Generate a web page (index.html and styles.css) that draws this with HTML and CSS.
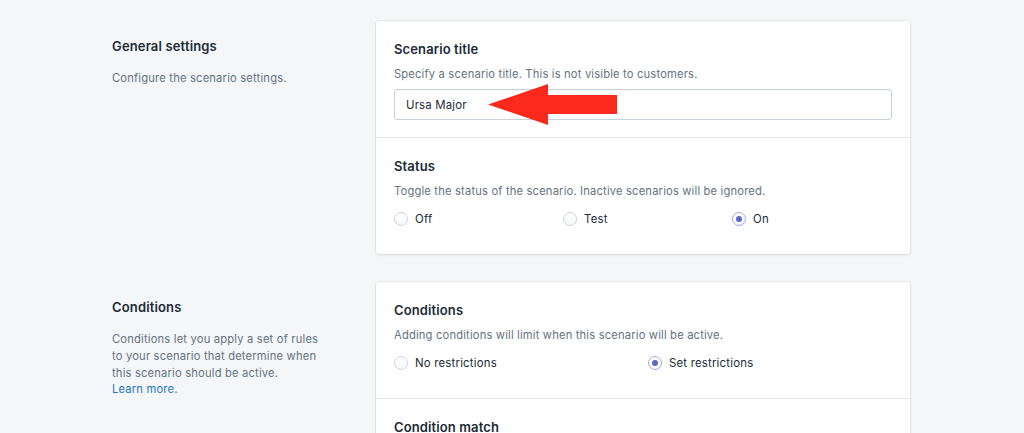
FILE: index.html
```html
<!DOCTYPE html>
<html lang="en">
<head>
<meta charset="utf-8">
<title>Scenario settings</title>
<link rel="stylesheet" href="styles.css">
</head>
<body>
<div class="page">
  <section class="row">
    <div class="annot">
      <h2 class="annot-title">General settings</h2>
      <p class="annot-desc">Configure the scenario settings.</p>
    </div>
    <div class="card">
      <div class="card-section section-field">
        <h3 class="sec-title">Scenario title</h3>
        <p class="sec-desc">Specify a scenario title. This is not visible to customers.</p>
        <div class="field">
          <input class="text-input" type="text" value="Ursa Major">
          <svg class="arrow" width="129" height="41" viewBox="0 0 129 41" aria-hidden="true">
            <polygon points="0,20.5 60,0 60,11 129,11 129,30 60,30 60,41" fill="#fb2a1d"/>
          </svg>
        </div>
      </div>
      <div class="card-section divided">
        <h3 class="sec-title">Status</h3>
        <p class="sec-desc">Toggle the status of the scenario. Inactive scenarios will be ignored.</p>
        <div class="choices choices-3">
          <label class="choice"><span class="radio"></span><span class="choice-label">Off</span></label>
          <label class="choice"><span class="radio"></span><span class="choice-label">Test</span></label>
          <label class="choice"><span class="radio checked"></span><span class="choice-label">On</span></label>
        </div>
      </div>
    </div>
  </section>
  <section class="row">
    <div class="annot">
      <h2 class="annot-title">Conditions</h2>
      <p class="annot-desc">Conditions let you apply a set of rules to your scenario that determine when this scenario should be active.<br><a class="link" href="#">Learn more.</a></p>
    </div>
    <div class="card">
      <div class="card-section">
        <h3 class="sec-title">Conditions</h3>
        <p class="sec-desc">Adding conditions will limit when this scenario will be active.</p>
        <div class="choices choices-2">
          <label class="choice"><span class="radio"></span><span class="choice-label">No restrictions</span></label>
          <label class="choice"><span class="radio checked"></span><span class="choice-label">Set restrictions</span></label>
        </div>
      </div>
      <div class="card-section divided">
        <h3 class="sec-title">Condition match</h3>
      </div>
    </div>
  </section>
</div>
</body>
</html>
```

FILE: styles.css
```css
* { box-sizing: border-box; }
html, body { margin: 0; padding: 0; }
body {
  background: #f4f6f8;
  font-family: Inter, "Noto Sans", "Liberation Sans", sans-serif;
  color: #212b36;
  height: 433px;
  overflow: hidden;
}
.page {
  padding: 21px 0 0 112px;
  display: flex;
  flex-direction: column;
  gap: 28px;
}
.row {
  display: grid;
  grid-template-columns: 244px 534px;
  column-gap: 20px;
  align-items: start;
}
.annot { padding-top: 17px; }
.annot-title {
  margin: 0;
  font-size: 13px;
  letter-spacing: 0.15px;
  line-height: 16px;
  font-weight: 600;
}
.annot-desc {
  margin: 16px 0 0;
  width: 213px;
  font-size: 11.2px;
  letter-spacing: 0.18px;
  line-height: 16.8px;
  color: #637381;
}
.link { color: #1f76c1; text-decoration: none; }
.card {
  background: #fff;
  border-radius: 3px;
  box-shadow: 0 0 0 1px rgba(63,63,68,.05), 0 1px 3px 0 rgba(63,63,68,.12);
}
.card-section { padding: 20px 18px 25px 18px; }
.card-section.section-field { padding-bottom: 17px; }
.card-section.divided { border-top: 1px solid #e3e6ea; }
.sec-title {
  margin: 0;
  font-size: 13px;
  letter-spacing: 0.12px;
  line-height: 16px;
  font-weight: 600;
}
.sec-desc {
  margin: 8px 0 0;
  font-size: 11.2px;
  letter-spacing: 0.17px;
  line-height: 18px;
  color: #637381;
}
.field { position: relative; margin-top: 6px; }
.text-input {
  display: block;
  width: 100%;
  height: 31px;
  margin: 0;
  padding: 0 11px;
  border: 1px solid #c9d0d7;
  border-radius: 3px;
  background: #fff;
  font: inherit;
  font-size: 11.4px;
  letter-spacing: 0.18px;
  color: #212b36;
  box-shadow: inset 0 1px 0 rgba(99,115,129,.05);
}
.arrow {
  position: absolute;
  left: 94px;
  top: -5px;
}
.choices { display: grid; margin-top: 9px; }
.choices-3 { grid-template-columns: repeat(3, 169px); }
.choices-2 { grid-template-columns: repeat(2, 254px); }
.choice {
  display: flex;
  align-items: center;
  gap: 7px;
  height: 20px;
  font-size: 11.4px;
  letter-spacing: 0.2px;
  color: #212b36;
}
.radio {
  width: 14px;
  height: 14px;
  border-radius: 50%;
  border: 1px solid #cdd3da;
  background: linear-gradient(#fff, #f6f7f9);
  display: flex;
  align-items: center;
  justify-content: center;
  flex: none;
}
.radio.checked { border-color: #a3aae6; }
.radio.checked::after {
  content: "";
  width: 6px;
  height: 6px;
  border-radius: 50%;
  background: #5c6ac4;
}
```
